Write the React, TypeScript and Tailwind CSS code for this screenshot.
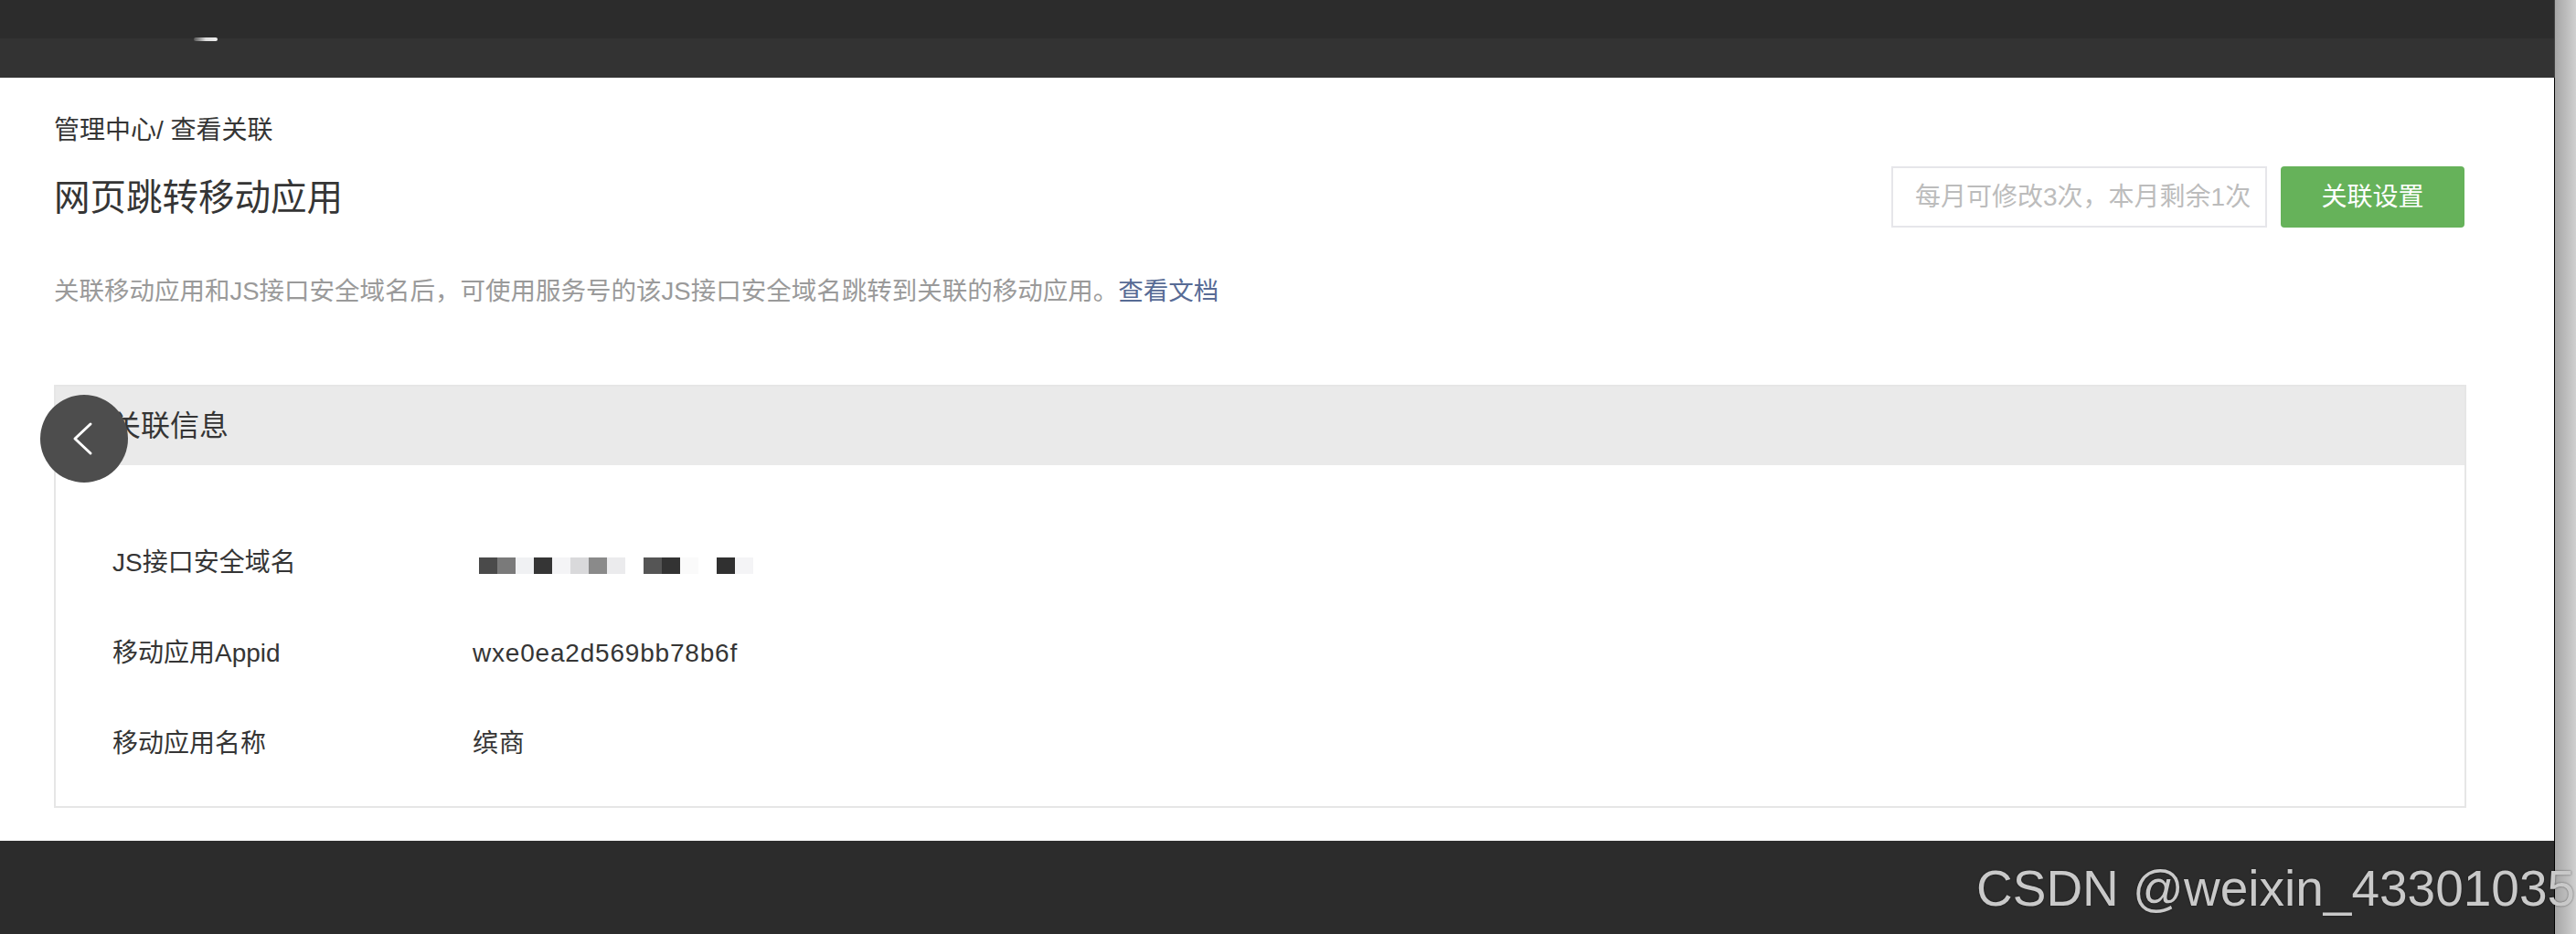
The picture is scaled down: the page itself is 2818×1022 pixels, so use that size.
import React from 'react';

const mosaic = [
  '#4a4a4a', '#7a7a7a', '#f0f1f3', '#353535', '#f4f4f6', '#d9d9db', '#8a8a8a', '#ebebed',
  '#ffffff', '#555555', '#333333', '#fafafa', '#ffffff', '#303030', '#f4f4f6',
];

const rows = [
  { label: 'JS接口安全域名', value: null },
  { label: '移动应用Appid', value: 'wxe0ea2d569bb78b6f' },
  { label: '移动应用名称', value: '缤商' },
];

function Mosaic() {
  return (
    <div className="flex ml-[7px] mt-[6px]">
      {mosaic.map((c, i) => (
        <div key={i} className="w-[20px] h-[18px]" style={{ backgroundColor: c }} />
      ))}
    </div>
  );
}

export default function App() {
  return (
    <div
      className="relative w-[2818px] h-[1022px] overflow-hidden flex bg-white"
      style={{ fontFamily: '"Liberation Sans", "Noto Sans CJK SC", sans-serif' }}
    >
      {/* page */}
      <div className="w-[2794px] flex flex-col">
        <div className="relative h-[42px] bg-[#2c2c2c]">
          <div className="absolute left-[212px] top-[41px] w-[26px] h-[4px] bg-gradient-to-r from-[#555] via-[#ddd] to-[#eee] rounded-sm" />
        </div>
        <div className="h-[43px] bg-[#333333]" />

        <div className="flex-1 bg-white pl-[59px] pr-[96px] pt-[44px]">
          <div className="text-[28px] leading-[28px] text-[#353535]">管理中心/ 查看关联</div>

          <div className="mt-[25px] h-[67px] flex items-center justify-between">
            <h1 className="text-[39.5px] leading-[40px] text-[#353535]">网页跳转移动应用</h1>
            <div className="flex items-center gap-[15px] mr-[2px]">
              <div className="w-[411px] h-[67px] border-2 border-[#e6e6ea] pl-[24px] flex items-center text-[28px] leading-[28px] text-[#bcbcbc]">
                每月可修改3次，本月剩余1次
              </div>
              <button className="w-[201px] h-[67px] rounded-[4px] bg-[#66b25a] text-white text-[28px] leading-[28px]">
                关联设置
              </button>
            </div>
          </div>

          <p className="mt-[56px] text-[27.5px] leading-[28px] text-[#9a9a9a]">
            关联移动应用和JS接口安全域名后，可使用服务号的该JS接口安全域名跳转到关联的移动应用。
            <span className="text-[#576b95]">查看文档</span>
          </p>

          <div className="mt-[88px] border-2 border-[#e6e6e6]">
            <div className="h-[86px] bg-[#eaeaea] pl-[61px] flex items-center text-[32px] leading-[32px] text-[#353535]">
              关联信息
            </div>
            <div className="pt-[57px] pb-[19px] pl-[62px]">
              {rows.map((r) => (
                <div key={r.label} className="h-[99px] flex items-center text-[28px] leading-[28px] text-[#353535]">
                  <div className="w-[394px]">{r.label}</div>
                  {r.value ? <div className="tracking-[0.8px]">{r.value}</div> : <Mosaic />}
                </div>
              ))}
            </div>
          </div>
        </div>

        <div className="h-[102px] bg-[#2c2c2c]" />
      </div>

      {/* window edge + scrollbar */}
      <div className="w-[1px] flex flex-col">
        <div className="h-[85px] bg-[#444444]" />
        <div className="flex-1 bg-black" />
      </div>
      <div className="w-[23px] bg-gradient-to-r from-[#a6a6a6] to-[#d0d0d0]" />

      {/* back button */}
      <button className="absolute left-[44px] top-[432px] w-[96px] h-[96px] rounded-full bg-[#4d4d4d] flex items-center justify-center">
        <svg width="40" height="40" viewBox="0 0 40 40" fill="none" stroke="#ffffff" strokeWidth="3" strokeLinecap="round" strokeLinejoin="round">
          <path d="M27 4 L10 20 L27 36" />
        </svg>
      </button>

      {/* watermark */}
      <div className="absolute left-[2162px] top-[945px] text-[55px] leading-[55px] text-[#c9c9c9] whitespace-nowrap [text-shadow:0_0_2px_rgba(0,0,0,0.6)]">
        CSDN @weixin_43301035
      </div>
    </div>
  );
}
